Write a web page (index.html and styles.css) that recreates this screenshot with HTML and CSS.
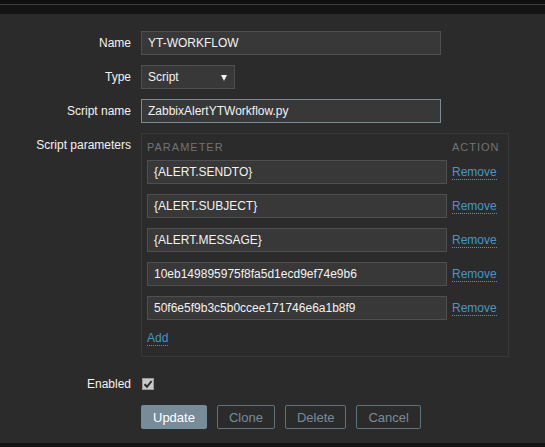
FILE: index.html
```html
<!DOCTYPE html>
<html>
<head>
<meta charset="utf-8">
<link rel="stylesheet" href="styles.css">
</head>
<body>
<div class="topbar"></div>
<div class="subbar"></div>
<div class="panel">
  <div class="row">
    <label class="lbl">Name</label>
    <div class="input wide">YT-WORKFLOW</div>
  </div>
  <div class="row">
    <label class="lbl">Type</label>
    <div class="input select">Script<span class="arrow"></span></div>
  </div>
  <div class="row">
    <label class="lbl">Script name</label>
    <div class="input wide focus">ZabbixAlertYTWorkflow.py</div>
  </div>
  <div class="row">
    <label class="lbl">Script parameters</label>
    <div class="params">
      <div class="phead">
        <span class="hcol">Parameter</span>
        <span class="hcol act">Action</span>
      </div>
      <div class="prow"><div class="input pin">{ALERT.SENDTO}</div><a class="link">Remove</a></div>
      <div class="prow"><div class="input pin">{ALERT.SUBJECT}</div><a class="link">Remove</a></div>
      <div class="prow"><div class="input pin">{ALERT.MESSAGE}</div><a class="link">Remove</a></div>
      <div class="prow"><div class="input pin">10eb149895975f8fa5d1ecd9ef74e9b6</div><a class="link">Remove</a></div>
      <div class="prow"><div class="input pin">50f6e5f9b3c5b0ccee171746e6a1b8f9</div><a class="link">Remove</a></div>
      <div class="addrow"><a class="link">Add</a></div>
    </div>
  </div>
  <div class="row enabled">
    <label class="lbl">Enabled</label>
    <span class="check"><svg width="10" height="10" viewBox="0 0 10 10"><path d="M1.5 5.2 L4 7.8 L8.6 2" fill="none" stroke="#2a2a2a" stroke-width="2"/></svg></span>
  </div>
  <div class="row buttons">
    <span></span>
    <div class="btns">
      <button class="btn primary">Update</button>
      <button class="btn alt">Clone</button>
      <button class="btn alt">Delete</button>
      <button class="btn alt">Cancel</button>
    </div>
  </div>
</div>
<div class="bottombar"></div>
</body>
</html>
```
FILE: styles.css
```css
html, body {
  margin: 0;
  padding: 0;
  background: #2b2b2b;
  font-family: "Liberation Sans", Arial, sans-serif;
  font-size: 12px;
  color: #f2f2f2;
  overflow: hidden;
}
.topbar {
  height: 4px;
  background: #0f0f0f;
  border-bottom: 1px solid #3c3c3c;
}
.subbar {
  height: 9px;
  background: #141414;
}
.panel {
  height: 429px;
  padding-top: 17px;
  box-sizing: border-box;
}
.row {
  display: grid;
  grid-template-columns: 131px auto;
  column-gap: 10px;
  align-items: start;
  margin-bottom: 10px;
}
.lbl {
  text-align: right;
  line-height: 24px;
  white-space: nowrap;
}
.input {
  box-sizing: border-box;
  height: 24px;
  line-height: 22px;
  background: #383838;
  border: 1px solid #4f4f4f;
  padding: 0 6px;
  color: #f2f2f2;
  white-space: nowrap;
  position: relative;
}
.wide { width: 300px; }
.focus { border-color: #768d99; }
.select { width: 94px; }
.arrow {
  position: absolute;
  right: 7px;
  top: 9px;
  width: 0;
  height: 0;
  border-left: 3.5px solid transparent;
  border-right: 3.5px solid transparent;
  border-top: 6px solid #f2f2f2;
}
.params {
  box-sizing: border-box;
  width: 368px;
  height: 224px;
  border: 1px solid #383838;
  padding: 5px;
}
.phead {
  display: grid;
  grid-template-columns: 300px auto;
  column-gap: 5px;
  height: 16px;
  line-height: 16px;
  margin-bottom: 5px;
}
.hcol {
  text-transform: uppercase;
  color: #737373;
  font-size: 11px;
  letter-spacing: 1px;
}
.prow {
  display: grid;
  grid-template-columns: 300px auto;
  column-gap: 5px;
  align-items: center;
  margin-bottom: 10px;
}
.pin { width: 300px; }
.link {
  color: #4796c4;
  border-bottom: 1px dotted #4796c4;
  justify-self: start;
  line-height: 14px;
}
.addrow {
  line-height: 16px;
  height: 16px;
}
.enabled {
  height: 30px;
  align-items: center;
  padding-top: 2px;
  margin-bottom: 6px;
}
.enabled .lbl { line-height: 16px; }
.check {
  box-sizing: border-box;
  width: 12px;
  height: 12px;
  margin-left: 1px;
  background: #c9c9c9;
  border: 1px solid #9a9a9a;
  display: flex;
  align-items: center;
  justify-content: center;
}
.check svg { display: block; }
.btns {
  display: flex;
  gap: 10px;
}
.btn {
  box-sizing: border-box;
  height: 24px;
  padding: 0 11px;
  font-family: "Liberation Sans", Arial, sans-serif;
  font-size: 13px;
  border-radius: 2px;
  border: 1px solid #768d99;
  cursor: pointer;
}
.primary {
  background: #768d99;
  color: #ffffff;
}
.alt {
  background: #2b2b2b;
  color: #768d99;
  border-color: #5f727d;
}
.bottombar {
  height: 4px;
  background: #141414;
}
```
